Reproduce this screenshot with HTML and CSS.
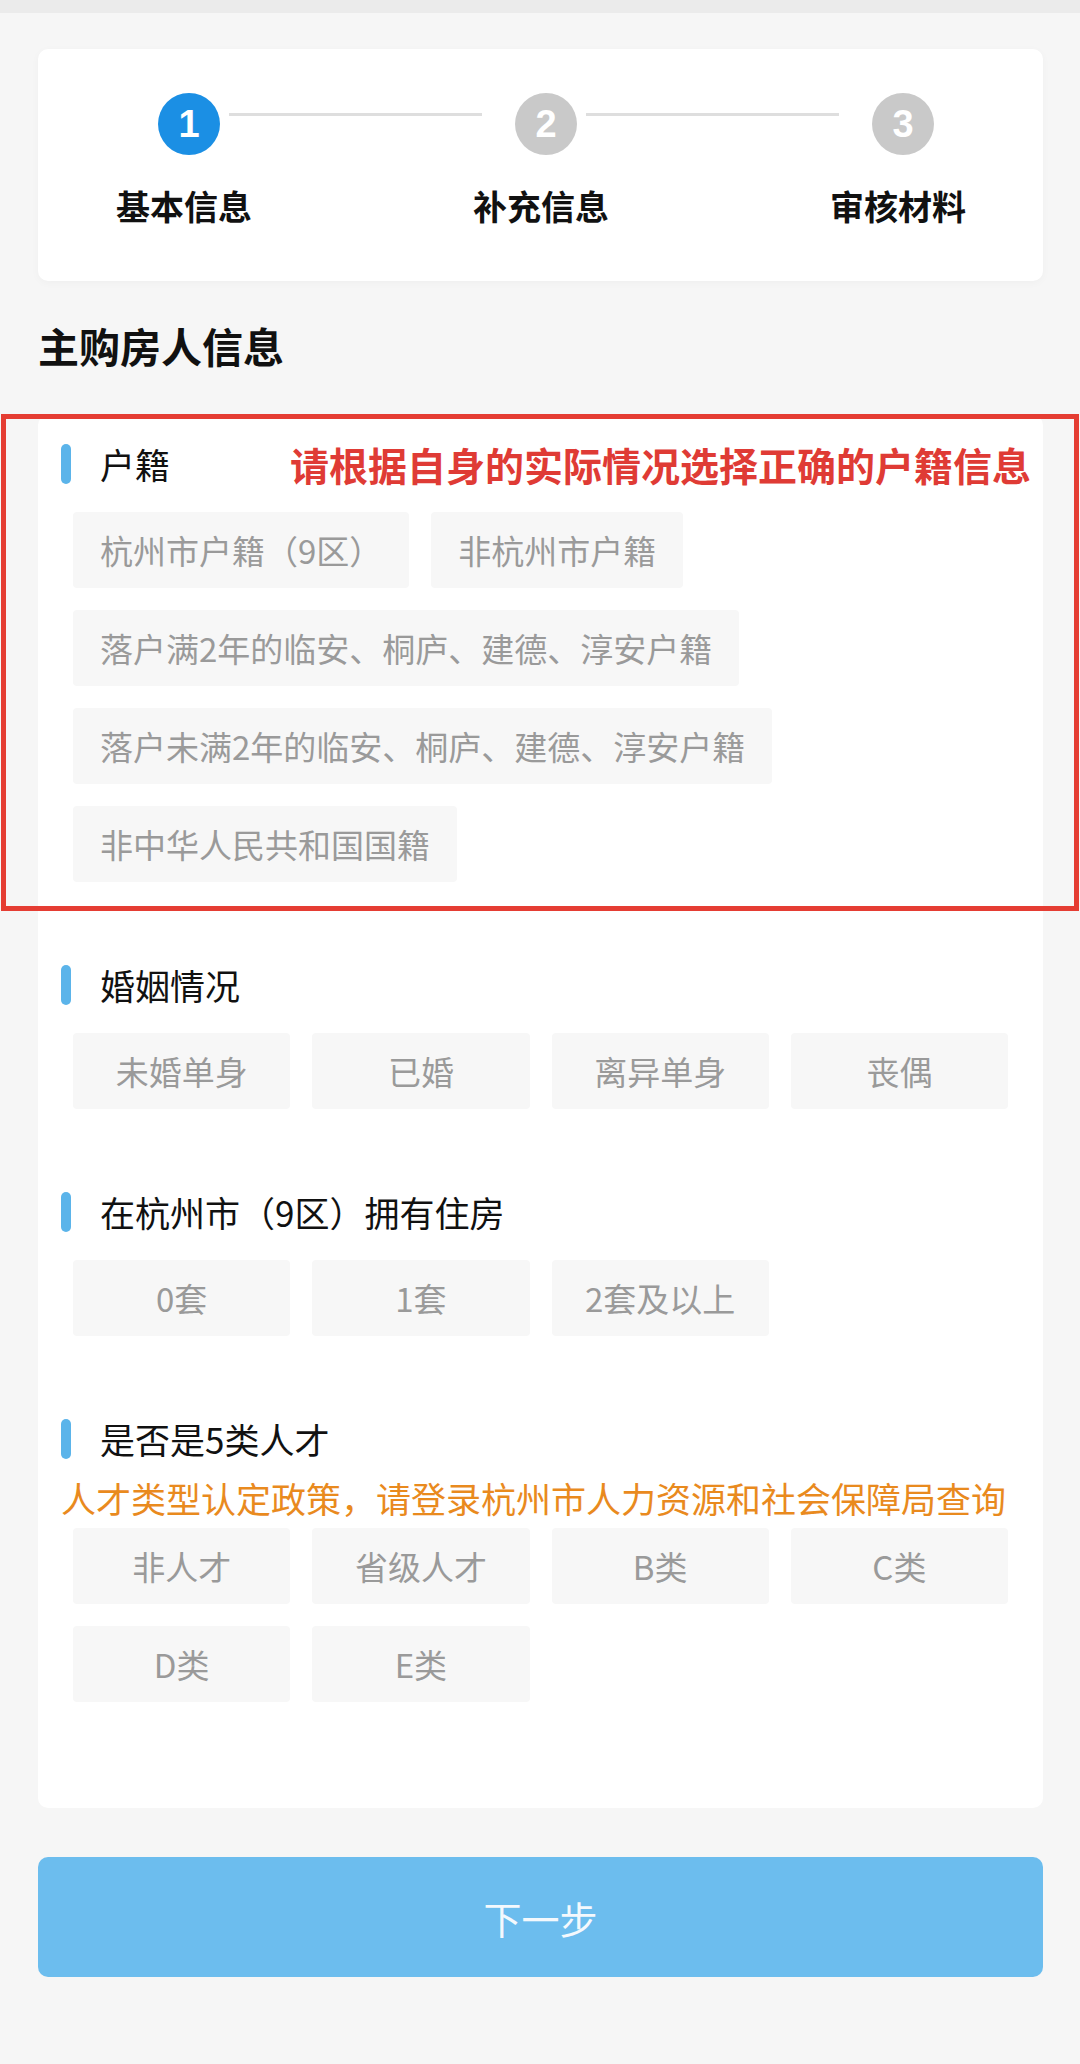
FILE: index.html
```html
<!DOCTYPE html>
<html>
<head>
    <meta charset="UTF-8">
    <title>主购房人信息</title>
    <link rel="stylesheet" href="styles.css">
</head>
<body>
<div class="top-strip"></div>

<div class="page">
    <div class="steps-card">
        <div class="steps-track">
            <span class="step-dot active">1</span>
            <span class="step-line"></span>
            <span class="step-dot">2</span>
            <span class="step-line"></span>
            <span class="step-dot">3</span>
        </div>
        <div class="steps-labels">
            <span>基本信息</span>
            <span>补充信息</span>
            <span>审核材料</span>
        </div>
    </div>

    <h2 class="page-title">主购房人信息</h2>

    <div class="form-card">
        <div class="form-section marked">
            <div class="field-label">
                <span class="bar"></span>
                <span class="label-text">户籍</span>
                <span class="mark-hint">请根据自身的实际情况选择正确的户籍信息</span>
            </div>
            <div class="option-wrap">
                <span class="option">杭州市户籍（9区）</span>
                <span class="option">非杭州市户籍</span>
                <span class="option">落户满2年的临安、桐庐、建德、淳安户籍</span>
                <span class="option">落户未满2年的临安、桐庐、建德、淳安户籍</span>
                <span class="option">非中华人民共和国国籍</span>
            </div>
            <div class="mark-box"></div>
        </div>

        <div class="form-section">
            <div class="field-label">
                <span class="bar"></span>
                <span class="label-text">婚姻情况</span>
            </div>
            <div class="option-grid">
                <span class="option">未婚单身</span>
                <span class="option">已婚</span>
                <span class="option">离异单身</span>
                <span class="option">丧偶</span>
            </div>
        </div>

        <div class="form-section">
            <div class="field-label">
                <span class="bar"></span>
                <span class="label-text">在杭州市（9区）拥有住房</span>
            </div>
            <div class="option-grid">
                <span class="option">0套</span>
                <span class="option">1套</span>
                <span class="option">2套及以上</span>
            </div>
        </div>

        <div class="form-section">
            <div class="field-label">
                <span class="bar"></span>
                <span class="label-text">是否是5类人才</span>
            </div>
            <p class="field-tip">人才类型认定政策，请登录杭州市人力资源和社会保障局查询</p>
            <div class="option-grid tight">
                <span class="option">非人才</span>
                <span class="option">省级人才</span>
                <span class="option">B类</span>
                <span class="option">C类</span>
                <span class="option">D类</span>
                <span class="option">E类</span>
            </div>
        </div>
    </div>

    <button class="next-btn">下一步</button>
</div>
</body>
</html>
```

FILE: styles.css
```css
body {
    margin: 0;
    background-color: #f6f6f6;
    font-family: "Noto Sans CJK SC", "Noto Sans", sans-serif;
    color: #111;
    min-height: 2064px;
}

.top-strip {
    height: 13px;
    background-color: #ebebeb;
}

.page {
    padding: 0 37px 0 38px;
}

/* steps */
.steps-card {
    margin-top: 36px;
    padding: 44px 0 55px;
    background-color: #fff;
    border-radius: 10px;
    box-shadow: 0 2px 8px rgba(0, 0, 0, 0.03);
}

.steps-track {
    display: flex;
    align-items: flex-start;
    padding: 0 109px 0 120px;
}

.step-dot {
    flex: none;
    width: 62px;
    height: 62px;
    border-radius: 50%;
    background-color: #c9c9c9;
    color: #fff;
    font-family: "Liberation Sans", Arial, sans-serif;
    font-weight: bold;
    font-size: 38px;
    line-height: 62px;
    text-align: center;
}

.step-dot.active {
    background-color: #1b8fe4;
}

.step-line {
    flex: 1;
    height: 3px;
    margin: 20px 33px 0 9px;
    background-color: #dedede;
}

.steps-labels {
    display: flex;
    justify-content: space-between;
    margin-top: 30px;
    padding: 0 77px 0 78px;
    font-size: 34px;
    font-weight: bold;
    line-height: 41px;
    color: #111;
}

.page-title {
    margin: 40px 0 0;
    font-size: 41px;
    line-height: 48px;
    font-weight: bold;
    color: #111;
}

/* form */
.form-card {
    margin-top: 46px;
    padding: 29px 23px 106px;
    background-color: #fff;
    border-radius: 10px;
}

.form-section + .form-section {
    margin-top: 83px;
}

.form-section.marked {
    position: relative;
}

.field-label {
    display: flex;
    align-items: center;
    height: 40px;
}

.bar {
    flex: none;
    width: 10px;
    height: 40px;
    border-radius: 5px;
    background-color: #5bb4ea;
}

.label-text {
    margin-left: 29px;
    font-size: 35px;
    line-height: 40px;
    white-space: nowrap;
}

.mark-hint {
    flex: none;
    margin-left: auto;
    margin-right: -11px;
    font-size: 39px;
    font-weight: bold;
    line-height: 40px;
    color: #df3b35;
    white-space: nowrap;
}

.mark-box {
    position: absolute;
    top: -30px;
    left: -60px;
    right: -59px;
    bottom: -29px;
    border: 5px solid #e53d33;
    pointer-events: none;
}

.field-tip {
    margin: 18px 0 0;
    font-size: 35px;
    line-height: 42px;
    color: #e98a1e;
    white-space: nowrap;
}

.option {
    display: block;
    height: 76px;
    line-height: 76px;
    border-radius: 4px;
    background-color: #f7f7f7;
    color: #9a9a9a;
    font-size: 33px;
    white-space: nowrap;
}

.option-wrap {
    display: flex;
    flex-wrap: wrap;
    gap: 22px;
    margin-top: 28px;
    padding: 0 12px;
}

.option-wrap .option {
    padding: 0 27px;
}

.option-grid {
    display: grid;
    grid-template-columns: repeat(4, 1fr);
    gap: 22px;
    margin-top: 28px;
    padding: 0 12px;
}

.option-grid.tight {
    margin-top: 9px;
}

.option-grid .option {
    text-align: center;
}

.next-btn {
    display: block;
    width: 100%;
    height: 120px;
    margin-top: 49px;
    border: none;
    border-radius: 10px;
    background-color: #6cbdee;
    color: #f4f9fd;
    font-family: "Noto Sans CJK SC", sans-serif;
    font-size: 38px;
}
```
